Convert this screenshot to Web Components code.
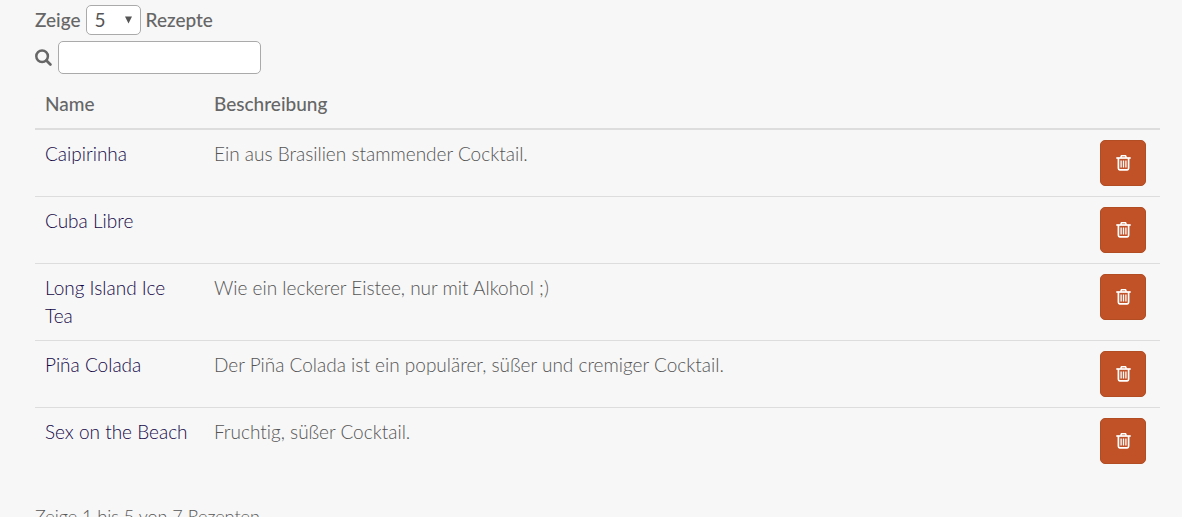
<!DOCTYPE html>
<html lang="de">
<head>
<meta charset="utf-8">
<meta name="viewport" content="width=device-width, initial-scale=1">
<title>Rezepte</title>
<style>
html { scrollbar-width: none; background: #f7f7f7; }
body {
  margin: 0;
  padding: 5px 22px 24px 35px;
  font: 300 19px/28px Lato, "Open Sans", sans-serif;
  font-variant-ligatures: none;
  color: #555;
}
</style>
</head>
<body>
<recipe-list></recipe-list>
<script>
class LengthPicker extends HTMLElement {
  constructor() {
    super();
    this.attachShadow({ mode: "open" }).innerHTML = `
      <style>
        :host { display: block; font-weight: 500; color: #666; }
        label { display: flex; align-items: center; gap: 5px; height: 30px; }
        .box { display: grid; align-items: center; }
        .box > * { grid-area: 1 / 1; }
        select {
          appearance: none; box-sizing: border-box; width: 55px; height: 30px; margin: 0;
          padding: 0 8px; border: 1px solid #aaa; border-radius: 5px; background: #fff;
          font: inherit; font-weight: 400; color: #555;
        }
        svg { justify-self: end; margin-right: 9px; pointer-events: none; }
      </style>
      <label><slot name="before"></slot>
        <span class="box">
          <select><option>5</option><option>10</option><option>25</option></select>
          <svg width="7" height="8" viewBox="0 0 7 8" fill="#555" aria-hidden="true"><path d="M0 0.5h7L3.5 7.5z"/></svg>
        </span>
        <slot name="after"></slot>
      </label>`;
  }
}

class SearchField extends HTMLElement {
  constructor() {
    super();
    this.attachShadow({ mode: "open" }).innerHTML = `
      <style>
        :host { display: block; }
        label { display: flex; align-items: center; gap: 6px; }
        input {
          box-sizing: border-box; width: 203px; height: 33px; margin: 0; padding: 0 8px;
          border: 1px solid #aaa; border-radius: 5px; background: #fff; font: inherit; color: inherit;
        }
      </style>
      <label>
        <svg width="17" height="18" viewBox="0 0 17 18" fill="none" stroke="#666" aria-hidden="true">
          <circle cx="7.1" cy="7.2" r="5.8" stroke-width="2.5"/>
          <path d="M11.4 11.5l4 4" stroke-width="2.7" stroke-linecap="round"/>
        </svg>
        <input type="search" aria-label="Suche">
      </label>`;
  }
}

class DeleteButton extends HTMLElement {
  constructor() {
    super();
    this.attachShadow({ mode: "open" }).innerHTML = `
      <style>
        :host { display: block; }
        button {
          display: grid; place-items: center; box-sizing: border-box; width: 46px; height: 46px;
          margin: 0; padding: 0; border: 1px solid #b14c23; border-radius: 5px;
          background: #c15227; color: #fff; cursor: pointer;
        }
      </style>
      <button type="button" aria-label="Löschen">
        <svg width="15" height="18" viewBox="0 0 15 18" fill="none" stroke="currentColor" aria-hidden="true">
          <path d="M0.3 4h14.4" stroke-width="1.7"/>
          <path d="M4.7 3.8l0.8-2.1h4l0.8 2.1" stroke-width="1.6"/>
          <path d="M2.4 4v10.2q0 1.6 1.3 1.6h7.6q1.3 0 1.3-1.6V4" stroke-width="1.7"/>
          <path d="M5.1 6.4v7M7.5 6.4v7M9.9 6.4v7" stroke-width="1.3"/>
        </svg>
      </button>`;
  }
}

const recipes = [
  ["Caipirinha", "Ein aus Brasilien stammender Cocktail."],
  ["Cuba Libre", ""],
  ["Long Island Ice Tea", "Wie ein leckerer Eistee, nur mit Alkohol ;)"],
  ["Piña Colada", "Der Piña Colada ist ein populärer, süßer und cremiger Cocktail."],
  ["Sex on the Beach", "Fruchtig, süßer Cocktail."]
];

class RecipeTable extends HTMLElement {
  constructor() {
    super();
    this.attachShadow({ mode: "open" }).innerHTML = `
      <style>
        :host { display: block; }
        table { width: 100%; table-layout: fixed; border-collapse: separate; border-spacing: 0; }
        .name { width: 169px; }
        .action { width: 70px; }
        th, td { padding: 10px; text-align: left; vertical-align: top; }
        th { font-weight: 500; color: #666; border-bottom: 2px solid #ddd; }
        tr + tr td { border-top: 1px solid #ddd; }
        a { color: #150848; text-decoration: none; }
      </style>
      <table>
        <colgroup><col class="name"><col><col class="action"></colgroup>
        <thead><tr><th>Name</th><th>Beschreibung</th><th></th></tr></thead>
        <tbody>${recipes.map(([name, text]) => `
          <tr><td><a href="#">${name}</a></td><td>${text}</td><td><delete-button></delete-button></td></tr>`).join("")}
        </tbody>
      </table>`;
  }
}

class RecipeList extends HTMLElement {
  constructor() {
    super();
    this.attachShadow({ mode: "open" }).innerHTML = `
      <style>
        :host { display: block; }
        search-field { margin: 6px 0; }
        .info { margin: 28px 0 0; font-size: 18px; }
      </style>
      <length-picker><span slot="before">Zeige</span><span slot="after">Rezepte</span></length-picker>
      <search-field></search-field>
      <recipe-table></recipe-table>
      <p class="info">Zeige 1 bis 5 von 7 Rezepten</p>`;
  }
}

customElements.define("length-picker", LengthPicker);
customElements.define("search-field", SearchField);
customElements.define("delete-button", DeleteButton);
customElements.define("recipe-table", RecipeTable);
customElements.define("recipe-list", RecipeList);
</script>
</body>
</html>
